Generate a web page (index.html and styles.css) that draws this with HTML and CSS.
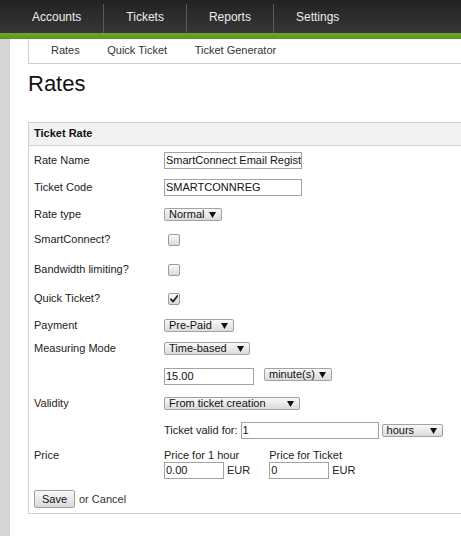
FILE: index.html
```html
<!DOCTYPE html>
<html lang="en">
<head>
<meta charset="utf-8">
<title>Rates</title>
<link rel="stylesheet" href="styles.css">
</head>
<body>
<header class="topnav">
  <ul class="topnav-list">
    <li class="topnav-item">Accounts</li>
    <li class="topnav-item">Tickets</li>
    <li class="topnav-item">Reports</li>
    <li class="topnav-item">Settings</li>
  </ul>
</header>
<div class="topnav-accent"></div>
<div class="layout">
  <div class="strip"></div>
  <main class="main">
    <nav class="subnav">
      <a class="subnav-link">Rates</a>
      <a class="subnav-link">Quick Ticket</a>
      <a class="subnav-link">Ticket Generator</a>
    </nav>
    <h1 class="title">Rates</h1>
    <section class="panel">
      <div class="panel-head">Ticket Rate</div>
      <div class="panel-body">
        <div class="row">
          <span class="lbl">Rate Name</span>
          <div class="field"><span class="input w138">SmartConnect Email Regist</span></div>
        </div>
        <div class="row mt10">
          <span class="lbl">Ticket Code</span>
          <div class="field"><span class="input w138">SMARTCONNREG</span></div>
        </div>
        <div class="row mt12">
          <span class="lbl">Rate type</span>
          <div class="field"><span class="select w58"><span>Normal</span><svg class="arrow" width="7" height="6" viewBox="0 0 7 6"><polygon points="0,0 7,0 3.5,6" fill="#111"/></svg></span></div>
        </div>
        <div class="row mt12">
          <span class="lbl">SmartConnect?</span>
          <div class="field"><span class="checkbox"></span></div>
        </div>
        <div class="row mt17">
          <span class="lbl">Bandwidth limiting?</span>
          <div class="field"><span class="checkbox"></span></div>
        </div>
        <div class="row mt16">
          <span class="lbl">Quick Ticket?</span>
          <div class="field"><span class="checkbox"><svg width="8" height="8" viewBox="0 0 8 8"><path d="M0.8 4.2 L3 6.6 L7.4 1" fill="none" stroke="#2a2a2a" stroke-width="1.9" stroke-linecap="round" stroke-linejoin="round"/></svg></span></div>
        </div>
        <div class="row mt14">
          <span class="lbl">Payment</span>
          <div class="field"><span class="select w70"><span>Pre-Paid</span><svg class="arrow" width="7" height="6" viewBox="0 0 7 6"><polygon points="0,0 7,0 3.5,6" fill="#111"/></svg></span></div>
        </div>
        <div class="row mt10">
          <span class="lbl">Measuring Mode</span>
          <div class="field"><span class="select w86"><span>Time-based</span><svg class="arrow" width="7" height="6" viewBox="0 0 7 6"><polygon points="0,0 7,0 3.5,6" fill="#111"/></svg></span></div>
        </div>
        <div class="row mt13 row-top">
          <span class="lbl"></span>
          <div class="field field-wide field-top"><span class="input w90">15.00</span><span class="select w68"><span>minute(s)</span><svg class="arrow" width="7" height="6" viewBox="0 0 7 6"><polygon points="0,0 7,0 3.5,6" fill="#111"/></svg></span></div>
        </div>
        <div class="row mt12">
          <span class="lbl">Validity</span>
          <div class="field"><span class="select w136"><span>From ticket creation</span><svg class="arrow" width="7" height="6" viewBox="0 0 7 6"><polygon points="0,0 7,0 3.5,6" fill="#111"/></svg></span></div>
        </div>
        <div class="row mt12">
          <span class="lbl"></span>
          <div class="field"><span class="text">Ticket valid for:</span><span class="input w138">1</span><span class="select w61"><span>hours</span><svg class="arrow" width="7" height="6" viewBox="0 0 7 6"><polygon points="0,0 7,0 3.5,6" fill="#111"/></svg></span></div>
        </div>
        <div class="row mt10 row-top">
          <span class="lbl">Price</span>
          <div class="price-groups">
            <div class="price-group">
              <span class="price-title">Price for 1 hour</span>
              <div class="field"><span class="input w60">0.00</span><span class="text">EUR</span></div>
            </div>
            <div class="price-group">
              <span class="price-title">Price for Ticket</span>
              <div class="field"><span class="input w60">0</span><span class="text">EUR</span></div>
            </div>
          </div>
        </div>
        <div class="row mt11">
          <button class="btn" type="button">Save</button>
          <span class="or-text">or <a class="cancel">Cancel</a></span>
        </div>
      </div>
    </section>
  </main>
</div>
</body>
</html>
```

FILE: styles.css
```css
html, body {
  margin: 0;
  padding: 0;
}

body {
  font-family: "Liberation Sans", Arial, sans-serif;
  font-size: 11px;
  color: #222;
  background: #fff;
  overflow: hidden;
}

.topnav {
  height: 33px;
  background: linear-gradient(#222222, #373737);
}

.topnav-list {
  display: flex;
  margin: 0;
  padding: 0 0 0 10px;
  list-style: none;
  height: 33px;
}

.topnav-item {
  margin-top: 4px;
  height: 29px;
  box-sizing: border-box;
  padding: 0 22px 4px;
  display: flex;
  align-items: center;
  border-right: 1px solid #5a5a5a;
  color: #ededed;
  font-size: 12px;
}

.topnav-item:last-child {
  border-right: none;
}

.topnav-accent {
  height: 6px;
  background: linear-gradient(#6da72b, #5b9420);
}

.layout {
  display: flex;
  min-height: calc(100vh - 39px);
}

.strip {
  width: 10px;
  flex: none;
  background: #d6d6d6;
}

.main {
  flex: 1;
  margin-left: 18px;
  margin-right: -20px;
}

.subnav {
  height: 22px;
  padding: 0 0 2px 22px;
  border-left: 1px solid #cfcfcf;
  border-bottom: 1px solid #cfcfcf;
  display: flex;
  align-items: center;
  gap: 27.5px;
}

.subnav-link {
  color: #333;
  font-size: 11px;
}

.title {
  font-family: "Liberation Sans", Arial, sans-serif;
  font-size: 22px;
  font-weight: normal;
  line-height: 26px;
  margin: 7px 0 25px;
  color: #111;
}

.panel {
  border: 1px solid #cfcfcf;
}

.panel-head {
  height: 20px;
  padding: 0 0 2px 5px;
  background: #f2f2f2;
  border-bottom: 1px solid #cfcfcf;
  display: flex;
  align-items: center;
  font-weight: bold;
  color: #111;
}

.panel-body {
  padding: 6px 0 5px 5px;
  display: flex;
  flex-direction: column;
}

.row {
  display: flex;
  align-items: center;
}

.row-top {
  align-items: flex-start;
}

.mt10 { margin-top: 10px; }
.mt11 { margin-top: 11px; }
.mt12 { margin-top: 12px; }
.mt13 { margin-top: 13px; }
.mt14 { margin-top: 14px; }
.mt16 { margin-top: 16px; }
.mt17 { margin-top: 17px; }

.lbl {
  width: 130px;
  flex: none;
  line-height: 13px;
  color: #222;
}

.field {
  display: flex;
  align-items: center;
  gap: 3px;
}

.field-top {
  align-items: flex-start;
}

.field-wide {
  gap: 10px;
}

.text {
  line-height: 13px;
  color: #222;
}

.input {
  display: block;
  height: 17px;
  box-sizing: border-box;
  border: 1px solid #a3a3a3;
  padding: 0 1px;
  line-height: 15px;
  background: #fff;
  color: #111;
  white-space: nowrap;
  overflow: hidden;
}

.w60 { width: 60px; }
.w90 { width: 90px; }
.w138 { width: 138px; }

.select {
  display: flex;
  align-items: center;
  justify-content: space-between;
  height: 13px;
  box-sizing: border-box;
  border: 1px solid #a2a2a2;
  border-radius: 2px;
  background: linear-gradient(#f8f8f8, #dbdbdb);
  padding: 0 5px 0 4px;
  line-height: 11px;
  color: #111;
  white-space: nowrap;
}

.w58 { width: 58px; }
.w61 { width: 61px; }
.w68 { width: 68px; }
.w70 { width: 70px; }
.w86 { width: 86px; }
.w136 { width: 136px; }

.arrow {
  flex: none;
}

.checkbox {
  width: 12px;
  height: 12px;
  box-sizing: border-box;
  margin-left: 4px;
  border: 1px solid #9a9a9a;
  border-radius: 2px;
  background: linear-gradient(#fbfbfb, #dadada);
  display: flex;
  align-items: center;
  justify-content: center;
}

.price-groups {
  display: flex;
  gap: 19px;
}

.price-group {
  display: flex;
  flex-direction: column;
}

.price-title {
  line-height: 13px;
  color: #222;
}

.btn {
  width: 41px;
  height: 18px;
  box-sizing: border-box;
  padding: 0;
  border: 1px solid #a0a0a0;
  border-radius: 2px;
  background: linear-gradient(#f9f9f9, #d9d9d9);
  font-family: "Liberation Sans", Arial, sans-serif;
  font-size: 11px;
  color: #111;
}

.or-text {
  margin-left: 4px;
  line-height: 13px;
  color: #333;
}

.cancel {
  color: #333;
}
```
